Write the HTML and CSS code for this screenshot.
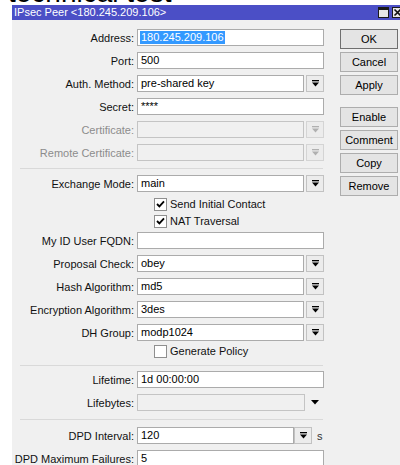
FILE: index.html
```html
<!DOCTYPE html>
<html>
<head>
<meta charset="utf-8">
<title>IPsec Peer</title>
<link rel="stylesheet" href="styles.css">
</head>
<body>
<div class="banner"><span>technical test</span></div>

<div class="window">
  <div class="titlebar">
    <span class="title">IPsec Peer &lt;180.245.209.106&gt;</span>
    <span class="tb-btn tb-max"></span>
    <span class="tb-btn tb-close">
      <svg width="9" height="9" viewBox="0 0 9 9"><path d="M1.5 1.5 L7.5 7.5 M7.5 1.5 L1.5 7.5" stroke="#111" stroke-width="1.6"/></svg>
    </span>
  </div>

  <div class="content">
    <div class="form">
      <div class="row">
        <label class="lbl">Address:</label>
        <div class="box"><span class="sel">180.245.209.106</span></div>
      </div>
      <div class="row">
        <label class="lbl">Port:</label>
        <div class="box">500</div>
      </div>
      <div class="row">
        <label class="lbl">Auth. Method:</label>
        <div class="combo">
          <div class="box">pre-shared key</div>
          <span class="drop"><svg class="ico" width="7" height="7" viewBox="0 0 7 7"><rect x="0" y="0" width="7" height="1.3"/><path d="M0 2.6 H7 L3.5 6.6 Z"/></svg></span>
        </div>
      </div>
      <div class="row">
        <label class="lbl">Secret:</label>
        <div class="box">****</div>
      </div>
      <div class="row">
        <label class="lbl off">Certificate:</label>
        <div class="combo">
          <div class="box dis"></div>
          <span class="drop dis"><svg class="ico" width="7" height="7" viewBox="0 0 7 7"><rect x="0" y="0" width="7" height="1.3"/><path d="M0 2.6 H7 L3.5 6.6 Z"/></svg></span>
        </div>
      </div>
      <div class="row">
        <label class="lbl off">Remote Certificate:</label>
        <div class="combo">
          <div class="box dis"></div>
          <span class="drop dis"><svg class="ico" width="7" height="7" viewBox="0 0 7 7"><rect x="0" y="0" width="7" height="1.3"/><path d="M0 2.6 H7 L3.5 6.6 Z"/></svg></span>
        </div>
      </div>

      <div class="sep sep-a"></div>

      <div class="row row-tight">
        <label class="lbl">Exchange Mode:</label>
        <div class="combo">
          <div class="box">main</div>
          <span class="drop"><svg class="ico" width="7" height="7" viewBox="0 0 7 7"><rect x="0" y="0" width="7" height="1.3"/><path d="M0 2.6 H7 L3.5 6.6 Z"/></svg></span>
        </div>
      </div>
      <div class="check-row first">
        <span class="cb"><svg width="9" height="8" viewBox="0 0 9 8"><path d="M1 4 L3.4 6.4 L8 1.3" fill="none" stroke="#000" stroke-width="1.8"/></svg></span>
        <span>Send Initial Contact</span>
      </div>
      <div class="check-row last">
        <span class="cb"><svg width="9" height="8" viewBox="0 0 9 8"><path d="M1 4 L3.4 6.4 L8 1.3" fill="none" stroke="#000" stroke-width="1.8"/></svg></span>
        <span>NAT Traversal</span>
      </div>
      <div class="row">
        <label class="lbl">My ID User FQDN:</label>
        <div class="box"></div>
      </div>
      <div class="row">
        <label class="lbl">Proposal Check:</label>
        <div class="combo">
          <div class="box">obey</div>
          <span class="drop"><svg class="ico" width="7" height="7" viewBox="0 0 7 7"><rect x="0" y="0" width="7" height="1.3"/><path d="M0 2.6 H7 L3.5 6.6 Z"/></svg></span>
        </div>
      </div>
      <div class="row">
        <label class="lbl">Hash Algorithm:</label>
        <div class="combo">
          <div class="box">md5</div>
          <span class="drop"><svg class="ico" width="7" height="7" viewBox="0 0 7 7"><rect x="0" y="0" width="7" height="1.3"/><path d="M0 2.6 H7 L3.5 6.6 Z"/></svg></span>
        </div>
      </div>
      <div class="row">
        <label class="lbl">Encryption Algorithm:</label>
        <div class="combo">
          <div class="box">3des</div>
          <span class="drop"><svg class="ico" width="7" height="7" viewBox="0 0 7 7"><rect x="0" y="0" width="7" height="1.3"/><path d="M0 2.6 H7 L3.5 6.6 Z"/></svg></span>
        </div>
      </div>
      <div class="row row-dh">
        <label class="lbl">DH Group:</label>
        <div class="combo">
          <div class="box">modp1024</div>
          <span class="drop"><svg class="ico" width="7" height="7" viewBox="0 0 7 7"><rect x="0" y="0" width="7" height="1.3"/><path d="M0 2.6 H7 L3.5 6.6 Z"/></svg></span>
        </div>
      </div>
      <div class="check-row policy">
        <span class="cb"></span>
        <span>Generate Policy</span>
      </div>

      <div class="sep sep-b"></div>

      <div class="row">
        <label class="lbl">Lifetime:</label>
        <div class="box">1d 00:00:00</div>
      </div>
      <div class="row">
        <label class="lbl">Lifebytes:</label>
        <div class="combo">
          <div class="box dis"></div>
          <span class="arrow"><svg width="8" height="5" viewBox="0 0 8 5"><path d="M0 0 H8 L4 4.5 Z" fill="#000"/></svg></span>
        </div>
      </div>

      <div class="sep sep-c"></div>

      <div class="row">
        <label class="lbl">DPD Interval:</label>
        <div class="combo short">
          <div class="box">120</div>
          <span class="drop"><svg class="ico" width="7" height="7" viewBox="0 0 7 7"><rect x="0" y="0" width="7" height="1.3"/><path d="M0 2.6 H7 L3.5 6.6 Z"/></svg></span>
          <span class="unit">s</span>
        </div>
      </div>
      <div class="row">
        <label class="lbl">DPD Maximum Failures:</label>
        <div class="box">5</div>
      </div>
    </div>

    <div class="actions">
      <button class="btn default">OK</button>
      <button class="btn">Cancel</button>
      <button class="btn">Apply</button>
      <button class="btn group">Enable</button>
      <button class="btn">Comment</button>
      <button class="btn">Copy</button>
      <button class="btn">Remove</button>
    </div>
  </div>
</div>
</body>
</html>
```

FILE: styles.css
```css
html, body {
  margin: 0;
  height: 465px;
  overflow: hidden;
  background: #ffffff;
}

body {
  font-family: "Liberation Sans", Arial, sans-serif;
  font-size: 11px;
  color: #111;
}

/* large heading sitting above the dialog, mostly scrolled out of view */
.banner {
  height: 5px;
  overflow: hidden;
  padding-left: 8px;
  display: flow-root;
}
.banner span {
  display: block;
  font-size: 28px;
  line-height: 28px;
  margin-top: -21px;
  color: #000;
  white-space: nowrap;
}

/* dialog window */
.window {
  margin-left: 12px;
  width: 400px;
  height: 470px;
  background: #f0f0f0;
}

.titlebar {
  height: 15px;
  background: #4b4fc6;
  color: #fff;
  display: flex;
  align-items: center;
  padding-left: 2px;
  padding-right: 9px;
}
.title {
  line-height: 15px;
  white-space: nowrap;
}
.tb-btn {
  width: 11px;
  height: 11px;
  box-sizing: border-box;
  background: #e8e8e8;
  border: 1px solid #1a1a1a;
  display: flex;
  align-items: center;
  justify-content: center;
}
.tb-max {
  margin-left: auto;
  border-top-width: 3px;
}
.tb-close {
  margin-left: 3px;
}

.content {
  display: flex;
  padding-top: 9px;
}

/* form column */
.form {
  width: 312px;
  display: flex;
  flex-direction: column;
}

.row {
  display: grid;
  grid-template-columns: 122px 187px;
  column-gap: 3px;
  align-items: center;
  height: 17px;
  margin-bottom: 6px;
}
.row-tight { margin-bottom: 4px; }
.row-dh { margin-bottom: 2px; }

.lbl {
  text-align: right;
  white-space: nowrap;
  color: #111;
}
.lbl.off { color: #8c8c8c; }

.box {
  height: 17px;
  box-sizing: border-box;
  border: 1px solid #ababab;
  background: #fff;
  padding-left: 3px;
  line-height: 15px;
  white-space: nowrap;
  overflow: hidden;
  color: #000;
}
.box.dis {
  background: #f0f0f0;
  border-color: #c4c4c4;
}

.sel {
  background: #3399ff;
  color: #fff;
  padding: 0 1px;
  display: inline-block;
  line-height: 13px;
  margin-left: -1px;
}

.combo {
  display: flex;
  align-items: center;
}
.combo .box { flex: 1; }

.drop {
  width: 18px;
  height: 17px;
  box-sizing: border-box;
  margin-left: 2px;
  border: 1px solid #c2c2c2;
  background: #ececec;
  display: flex;
  align-items: center;
  justify-content: center;
}
.drop .ico { fill: #000; }
.drop.dis { border-color: #d4d4d4; }
.drop.dis .ico { fill: #b0b0b0; }

.combo.short .box { flex: 0 0 157px; }
.combo.short .drop { margin-left: 0; }
.unit {
  margin-left: 5px;
  color: #333;
}

.arrow {
  width: 19px;
  display: flex;
  justify-content: center;
}

/* checkbox rows under the field column */
.check-row {
  display: flex;
  align-items: center;
  height: 16px;
  padding-left: 142px;
  gap: 3px;
  color: #111;
  white-space: nowrap;
}
.check-row.first { margin-bottom: 1px; }
.check-row.last { margin-bottom: 3px; }
.check-row.policy { margin-bottom: 5px; }

.cb {
  width: 13px;
  height: 13px;
  box-sizing: border-box;
  border: 1px solid #8f8f8f;
  background: #fff;
  display: flex;
  align-items: center;
  justify-content: center;
}

/* etched separators */
.sep {
  margin-left: 8px;
  width: 303px;
  height: 0;
  border-top: 1px solid #d9d9d9;
}
.sep-a { margin-top: 1px; margin-bottom: 6px; }
.sep-b { margin-top: 1px; margin-bottom: 5px; }
.sep-c { margin-top: 2px; margin-bottom: 7px; }

/* command buttons */
.actions {
  margin-left: 16px;
  width: 58px;
  display: flex;
  flex-direction: column;
}
.btn {
  height: 20px;
  margin: 0 0 3px 0;
  padding: 0;
  box-sizing: border-box;
  border: 1px solid #adadad;
  background: #e4e4e4;
  font-family: inherit;
  font-size: 11px;
  color: #000;
}
.btn.default { border-color: #6f6f6f; }
.btn.group { margin-top: 9px; }
```
